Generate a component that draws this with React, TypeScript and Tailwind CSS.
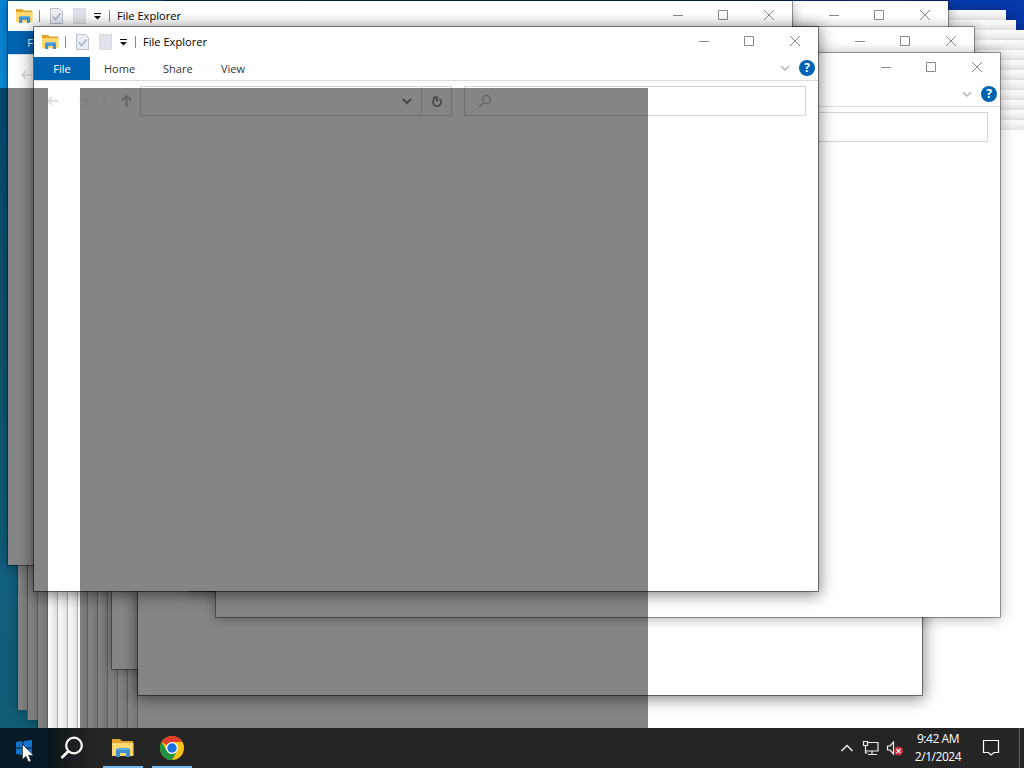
import clsx from "clsx";

interface WindowProps {
  className: string;
  active?: boolean;
  // How much of the window stays uncovered
  view?: "full" | "corner" | "right" | "controls" | "empty";
}

// Plain windows opened in a cascade, back to front
const cascade = Array.from({ length: 13 }, (_, i) => ({ left: 17 + i * 10, top: 10 + i * 10 }));

function FolderIcon({ className }: { className?: string }) {
  return (
    <svg viewBox="0 0 22 18" className={className}>
      <path d="M0 0h8l2 2h11v4H0z" fill="#e3a52f" />
      <path d="M0 4h21.500v13H0z" fill="#ffd970" />
      <path d="M4 18v-8h14v8h-4v-4H8v4z" fill="#3d8fd0" />
      <path d="M5 9h12v2H5z" fill="#62aee3" />
    </svg>
  );
}

function TitleBar({ full }: { full: boolean }) {
  return (
    <div className="flex h-[29px] items-center">
      {full && (
        <>
          <FolderIcon className="ml-2 h-[14px] w-[17px]" />
          <div className="ml-[6px] h-3 w-px bg-[#8a8a8a]" />
          <svg viewBox="0 0 13 16" className="ml-[10px] h-4 w-[13px]" fill="none">
            <path d="M.5.5h9l3 3v12H.5z" fill="#e9eef5" stroke="#b9c1cd" />
            <path d="M3 8.500l2.500 3 5-6" stroke="#a6b2c4" strokeWidth="1.500" />
          </svg>
          <svg viewBox="0 0 13 16" className="ml-[10px] h-4 w-[13px]">
            <path d="M.5.5h12v15H.5z" fill="#dfe4ea" stroke="#d5dae0" />
          </svg>
          <svg viewBox="0 0 7 7" className="ml-2 mt-0.5 h-[7px] w-[7px]">
            <path d="M0 0h7v1H0zM0 3h7L3.500 6.500z" fill="#111" />
          </svg>
          <div className="ml-2 h-3 w-px bg-[#8a8a8a]" />
          <span className="ml-[7px] text-[11.1px] leading-none text-black">File Explorer</span>
        </>
      )}
      <svg viewBox="0 0 104 12" className="-mt-px ml-auto mr-4 h-3 w-[104px]" fill="none" stroke="#8a8a8a">
        <path d="M1 6.500h10" />
        <path d="M46.500 1.500h9v9h-9z" />
        <path d="M92 1l10 10M102 1L92 11" />
      </svg>
    </div>
  );
}

function ExplorerWindow({ className, active, view = "full" }: WindowProps) {
  const showLeft = view === "full" || view === "corner";
  const showRight = view === "full" || view === "right";

  return (
    <div
      className={clsx(
        "absolute h-[566px] w-[786px] border bg-white bg-clip-padding",
        active
          ? "border-black/45 shadow-[0px_2px_14px_1px_rgba(0,0,0,0.48)]"
          : "border-black/35 shadow-[0px_1px_12px_0px_rgba(0,0,0,0.3)]",
        className,
      )}
    >
      {view !== "empty" && <TitleBar full={showLeft} />}
      {/* Ribbon tabs */}
      {(showLeft || showRight) && (
        <div className="flex h-[25px] items-center border-b border-[#dcdcdc] text-[11px] text-[#333]">
          {showLeft && (
            <div className="mt-px flex h-[23px] w-[56px] items-center justify-center bg-[#0063b1] pt-px text-white">
              File
            </div>
          )}
          {view === "full" && (
            <>
              <span className="ml-[14px] w-[59px] pt-0.5">Home</span>
              <span className="w-[58px] pt-0.5">Share</span>
              <span className="pt-0.5">View</span>
            </>
          )}
          {showRight && (
            <>
              <svg viewBox="0 0 10 6" className="ml-auto h-1.5 w-2.5" fill="none" stroke="#b5b5b5" strokeWidth="1.500">
                <path d="M1 1l4 4 4-4" />
              </svg>
              <div className="ml-[9px] mr-[3px] flex size-4 items-center justify-center rounded-full bg-[#0063b1] text-[12px] font-bold leading-none text-white">
                ?
              </div>
            </>
          )}
        </div>
      )}
      {/* Address row */}
      {(showLeft || showRight) && (
        <div className="mt-[5px] flex h-[30px] items-center">
          <svg viewBox="0 0 92 14" className="ml-[12px] h-[14px] w-[92px]" fill="none" strokeWidth="1.500">
            <path d="M12 7H2M6 3L2 7l4 4" stroke="#d8d8d8" />
            <path d="M32 7h10M38 3l4 4-4 4M57 6l2 2 2-2" stroke="#eeeeee" />
            <path d="M80.500 13V2M76 6.500L80.500 2 85 6.500" stroke="#c0c0c0" strokeWidth="2" />
          </svg>
          <div className="ml-[2px] flex h-[30px] w-[312px] items-center border border-[#d5d5d5]">
            <svg viewBox="0 0 10 7" className="ml-auto mr-[9px] h-[7px] w-2.5" fill="none" stroke="#8a8a8a" strokeWidth="2">
              <path d="M1 1l4 4 4-4" />
            </svg>
            <div className="flex h-full w-[30px] items-center justify-center border-l border-[#d5d5d5]">
              <svg viewBox="0 0 12 13" className="h-[13px] w-3" fill="none" stroke="#8a8a8a" strokeWidth="1.800">
                <path d="M8.500 4A4 4 0 1 1 3.500 4M2 2.500h4v4" />
              </svg>
            </div>
          </div>
          <div className="ml-3 flex h-[30px] w-[342px] items-center border border-[#d5d5d5]">
            <svg viewBox="0 0 14 14" className="ml-[13px] size-3.5" fill="none" stroke="#bdbdbd" strokeWidth="1.300">
              <circle cx="8.500" cy="5.500" r="4" />
              <path d="M5.500 8.500L1 13" />
            </svg>
          </div>
        </div>
      )}
    </div>
  );
}

function Taskbar() {
  return (
    <div className="absolute inset-x-0 bottom-0 flex h-10 items-center bg-[#252525] text-white">
      <div className="relative flex h-full w-12 items-center bg-[#061b25]">
        <svg viewBox="0 0 16 16" className="ml-4 size-4">
          <path d="M0 2l6.500-1v6.500H0zM7.500 1L16 0v7.500H7.500zM0 8.500h6.500V15L0 14zM7.500 8.500H16V16l-8.500-1z" fill="#1372ce" />
        </svg>
        <svg viewBox="0 0 12 19" className="absolute left-[22px] top-[16px] h-[19px] w-3">
          <path d="M.5.5v15l3.500-3.200 2.500 5.700 2.500-1L6.500 11.300h5z" fill="#fff" stroke="#222" strokeWidth=".6" />
        </svg>
      </div>
      <div className="flex h-full w-[50px] items-center bg-gradient-to-r from-[#081319] via-[#1a1f21] to-[#252525]">
        <svg viewBox="0 0 24 24" className="ml-3 size-6" fill="none" stroke="#fff" strokeWidth="2.200">
          <circle cx="14" cy="9.500" r="7.800" />
          <path d="M8.500 15l-7 7" strokeWidth="2.600" />
        </svg>
      </div>
      <div className="relative flex h-full w-[49px] items-center justify-center">
        <FolderIcon className="h-[18px] w-[22px]" />
        <div className="absolute bottom-0 left-[5px] h-0.5 w-10 bg-[#76b9ed]" />
      </div>
      <div className="relative flex h-full w-[49px] items-center justify-center">
        <svg viewBox="0 0 48 48" className="size-6">
          <circle cx="24" cy="24" r="24" fill="#fbc116" />
          <path d="M24 24L3.200 12A24 24 0 0 1 44.800 12H24z" fill="#e33b2e" />
          <path d="M3.200 12A24 24 0 0 0 24 48L34.400 30 24 24 13.600 30z" fill="#229342" />
          <circle cx="24" cy="24" r="12" fill="#fff" />
          <circle cx="24" cy="24" r="9.500" fill="#1a6fe0" />
        </svg>
        <div className="absolute bottom-0 left-[5px] h-0.5 w-10 bg-[#76b9ed]" />
      </div>

      {/* System tray */}
      <div className="ml-auto flex h-full items-center">
        <svg viewBox="0 0 64 16" className="h-4 w-16" fill="none" stroke="#eee" strokeWidth="1.200">
          <path d="M1.500 11L7 5.500l5.500 5.500" strokeWidth="1.500" />
          <path d="M27.500 2.500h10.500v8.500H26M32 11v3M28 14.500h9M23.500 1.500h4v4h-4zM25.500 5.500v7.500h2" />
          <path d="M47.500 6H50l3.500-4v12L50 10h-2.500z" />
          <circle cx="58.500" cy="11" r="4.500" fill="#c8303e" stroke="none" />
          <path d="M56.500 9l4 4M60.500 9l-4 4" />
        </svg>
        <div className="ml-[2px] w-[64px] text-center text-[12px] leading-[18px] tracking-[-0.45px]">
          <div>9:42 AM</div>
          <div>2/1/2024</div>
        </div>
        <svg viewBox="0 0 18 18" className="ml-3 h-[18px] w-[18px]" fill="none" stroke="#fff" strokeWidth="1.200">
          <path d="M1.500 1.500h15v12H12L9 16 6.500 13.500h-5z" />
        </svg>
        <div className="ml-[19px] mr-1 h-full w-px bg-[#666]" />
      </div>
    </div>
  );
}

export default function App() {
  return (
    <div className="relative h-[768px] w-[1024px] overflow-hidden bg-[linear-gradient(90deg,#0a8be0_0%,#0a5cc4_50%,#0838ad_100%)] font-['Open_Sans','Noto_Sans',sans-serif]">
      <div className="absolute left-0 top-0 h-full w-16 bg-[linear-gradient(180deg,#0a86dc_0%,#0c8fdc_12%,#1f9fd2_45%,#20b8f0_75%,#1fb0dc_100%)]" />

      {cascade.map((pos, i) => (
        <div
          key={pos.left}
          className={clsx(
            "absolute h-[700px] w-[989px] border-l bg-white bg-clip-padding shadow-[0_0_14px_0px_rgba(0,0,0,0.22)]",
            i === 1 ? "border-[#d08a98]" : "border-black/20",
          )}
          style={pos}
        />
      ))}

      <ExplorerWindow className="left-[111px] top-[104px]" view="empty" />
      <ExplorerWindow className="left-[137px] top-[130px]" view="empty" active />
      <ExplorerWindow className="left-[163px] top-0" view="controls" />
      <ExplorerWindow className="left-[189px] top-[26px]" view="controls" />
      <ExplorerWindow className="left-[215px] top-[52px]" view="right" />
      <ExplorerWindow className="left-[7px] top-0" view="corner" />
      <ExplorerWindow className="left-[33px] top-[26px]" active />

      {/* Dimmed regions */}
      <div className="absolute left-0 top-[88px] h-[640px] w-12 bg-black/48" />
      <div className="absolute left-20 top-[88px] h-[640px] w-[568px] bg-black/48" />

      <Taskbar />
    </div>
  );
}
